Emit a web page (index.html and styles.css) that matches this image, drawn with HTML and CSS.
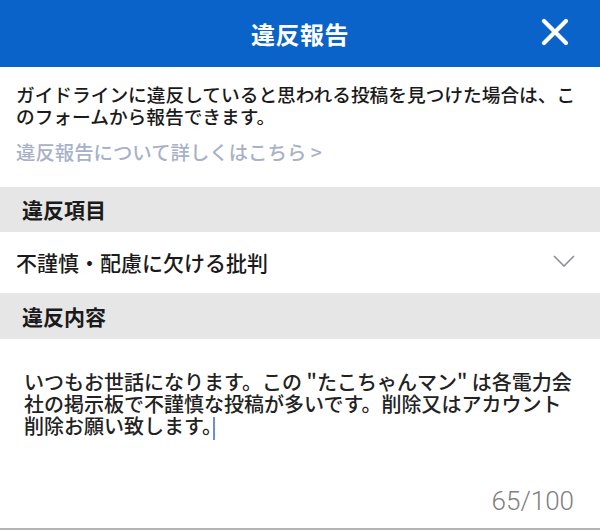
FILE: index.html
```html
<!DOCTYPE html>
<html lang="ja">
<head>
<meta charset="utf-8">
<title>違反報告</title>
<link rel="stylesheet" href="styles.css">
</head>
<body>
<div class="page">
  <header class="topbar">
    <span class="spacer"></span>
    <h1 class="title">違反報告</h1>
    <button class="close" aria-label="閉じる">
      <svg width="28" height="28" viewBox="0 0 28 28"><path d="M3 3 L25 25 M25 3 L3 25" stroke="#fff" stroke-width="4.2" stroke-linecap="round" fill="none"/></svg>
    </button>
  </header>
  <section class="intro">
    <p class="lead">ガイドラインに違反していると思われる投稿を見つけた場合は、こ<br>のフォームから報告できます。</p>
    <p class="more">違反報告について詳しくはこちら &gt;</p>
  </section>
  <div class="section-head">違反項目</div>
  <div class="select-row">
    <span>不謹慎・配慮に欠ける批判</span>
    <svg class="chev" width="22" height="12" viewBox="0 0 22 12"><path d="M1 1 L11 11 L21 1" stroke="#8e8e96" stroke-width="1.6" fill="none"/></svg>
  </div>
  <div class="section-head second">違反内容</div>
  <div class="content">
    <div class="text">いつもお世話になります。この "たこちゃんマン" は各電力会<br>社の掲示板で不謹慎な投稿が多いです。削除又はアカウント<br>削除お願い致します。<span class="caret"></span></div>
    <div class="counter">65/100</div>
  </div>
</div>
</body>
</html>
```
FILE: styles.css
```css
* { box-sizing: border-box; }
html, body { margin: 0; padding: 0; background: #fff; }
body {
  font-family: "Noto Sans CJK JP", "Noto Sans", sans-serif;
  color: #1f1f1f;
}
.page {
  width: 600px;
  height: 530px;
  display: flex;
  flex-direction: column;
  overflow: hidden;
}
.topbar {
  height: 67px;
  flex: none;
  background: #0a63c8;
  display: grid;
  grid-template-columns: 1fr auto 1fr;
  align-items: center;
}
.title {
  margin: 0;
  color: #fff;
  font-size: 24px;
  font-weight: 700;
  line-height: 67px;
  letter-spacing: 0.5px;
}
.close {
  justify-self: end;
  margin-right: 31px;
  margin-top: -3px;
  padding: 0;
  border: 0;
  background: none;
  width: 28px;
  height: 28px;
  display: flex;
}
.intro {
  padding: 16px 0 0 16px;
  height: 120px;
  flex: none;
}
.lead {
  margin: 0;
  font-size: 18.7px;
  font-weight: 500;
  line-height: 21.5px;
  white-space: nowrap;
  color: #1a1a1a;
}
.more {
  margin: 15px 0 0;
  font-size: 19.4px;
  line-height: 22px;
  color: #a8b1c8;
  font-weight: 500;
}
.section-head {
  height: 45px;
  flex: none;
  background: #e6e6e6;
  padding-left: 22px;
  font-size: 21px;
  font-weight: 700;
  line-height: 45px;
  color: #1a1a1a;
}
.section-head.second {
  height: 46px;
  line-height: 46px;
}
.select-row {
  height: 61px;
  flex: none;
  display: flex;
  align-items: center;
  justify-content: space-between;
  padding: 0 25px 0 16px;
  font-size: 21px;
  font-weight: 500;
  line-height: 26px;
  color: #1a1a1a;
}
.select-row span { margin-top: -1px; }
.chev { margin-top: -3px; }
.content {
  flex: 1;
  display: flex;
  flex-direction: column;
  justify-content: space-between;
  padding: 32px 26px 14px 24px;
  border-bottom: 2px solid #b4b4b4;
}
.text {
  font-size: 20px;
  font-weight: 500;
  line-height: 22px;
  white-space: nowrap;
  color: #222;
}
.caret {
  display: inline-block;
  width: 2px;
  height: 23px;
  background: #6a8de0;
  vertical-align: -6px;
  margin-left: -9px;
}
.counter {
  align-self: flex-end;
  font-family: Roboto, "Liberation Sans", sans-serif;
  font-weight: 300;
  font-size: 26px;
  line-height: 26px;
  color: #808080;
}
```
